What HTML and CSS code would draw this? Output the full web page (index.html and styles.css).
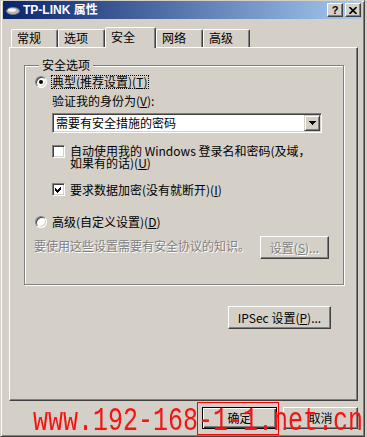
FILE: index.html
```html
<!DOCTYPE html>
<html lang="zh-CN">
<head>
    <meta charset="UTF-8">
    <title>TP-LINK 属性</title>
    <link rel="stylesheet" href="styles.css">
</head>
<body>
    <div class="window">
        <div class="titlebar">
            <svg class="app-icon" width="14" height="9" viewBox="0 0 14 9">
                <ellipse cx="7" cy="5" rx="6.5" ry="3.5" fill="#b8b8b8" stroke="#7a7a7a" stroke-width="1"/>
                <ellipse cx="6" cy="4" rx="4" ry="1.8" fill="#f4f4f4"/>
            </svg>
            <span class="title">TP-LINK 属性</span>
            <div class="title-buttons">
                <span class="tbtn">?</span>
                <span class="tbtn">
                    <svg width="8" height="7" viewBox="0 0 8 7">
                        <path d="M0.5 0 L7.5 7 M7.5 0 L0.5 7" stroke="#000" stroke-width="1.6"/>
                    </svg>
                </span>
            </div>
        </div>

        <div class="tabs">
            <div class="tab">常规</div>
            <div class="tab">选项</div>
            <div class="tab active">安全</div>
            <div class="tab">网络</div>
            <div class="tab">高级</div>
        </div>

        <div class="panel">
            <fieldset class="group">
                <legend>安全选项</legend>

                <div class="option-row typical">
                    <span class="radio checked"></span>
                    <span class="focus">典型(推荐设置)(<u>T</u>)</span>
                </div>

                <div class="field-label">验证我的身份为(<u>V</u>):</div>

                <div class="combo">
                    <span class="combo-text">需要有安全措施的密码</span>
                    <span class="combo-btn">
                        <svg width="7" height="4" viewBox="0 0 7 4" shape-rendering="crispEdges">
                            <polygon points="0,0 7,0 3.5,4" fill="#000"/>
                        </svg>
                    </span>
                </div>

                <div class="check-row auto-login">
                    <span class="checkbox"></span>
                    <span class="check-text">自动使用我的 Windows 登录名和密码(及域，<br>如果有的话)(<u>U</u>)</span>
                </div>

                <div class="check-row encrypt">
                    <span class="checkbox">
                        <svg width="7" height="7" viewBox="0 0 7 7" shape-rendering="crispEdges">
                            <path d="M0 2 L2 4 L6 0 L6 3 L2 7 L0 5 Z" fill="#000"/>
                        </svg>
                    </span>
                    <span class="check-text">要求数据加密(没有就断开)(<u>I</u>)</span>
                </div>

                <div class="option-row advanced">
                    <span class="radio"></span>
                    <span>高级(自定义设置)(<u>D</u>)</span>
                </div>

                <div class="advanced-row">
                    <span class="disabled-text">要使用这些设置需要有安全协议的知识。</span>
                    <button class="btn settings-btn" disabled>设置(<u>S</u>)...</button>
                </div>
            </fieldset>

            <div class="ipsec-row">
                <button class="btn ipsec-btn">IPSec 设置(<u>P</u>)...</button>
            </div>
        </div>

        <div class="footer">
            <button class="btn default">确定</button>
            <button class="btn">取消</button>
        </div>

        <div class="watermark">www.192-168-1-1.net.cn</div>
        <div class="highlight-box"></div>
    </div>
</body>
</html>
```

FILE: styles.css
```css
body {
    margin: 0;
    background: #d4d0c8;
    font-family: "Noto Sans CJK SC", sans-serif;
    font-size: 12px;
    color: #000;
}

.window {
    position: relative;
    box-sizing: border-box;
    width: 365px;
    height: 437px;
    padding: 0 2px;
    background: #d4d0c8;
    border: 1px solid;
    border-color: #d4d0c8 #404040 #404040 #d4d0c8;
    box-shadow: inset 1px 1px #fff, inset -1px -1px #808080;
}

/* title bar */
.titlebar {
    display: flex;
    align-items: center;
    height: 18px;
    background: linear-gradient(to right, #0a246a, #a6caf0);
    color: #fff;
}
.app-icon {
    margin-left: 3px;
    flex: none;
}
.title {
    margin-left: 3px;
    font-family: "Liberation Sans", "Noto Sans CJK SC", sans-serif;
    font-weight: bold;
    font-size: 12px;
    line-height: 18px;
}
.title-buttons {
    display: flex;
    gap: 2px;
    margin-left: auto;
    margin-right: 1px;
}
.tbtn {
    display: flex;
    align-items: center;
    justify-content: center;
    box-sizing: border-box;
    width: 16px;
    height: 14px;
    background: #d4d0c8;
    border: 1px solid;
    border-color: #fff #404040 #404040 #fff;
    box-shadow: inset -1px -1px #808080;
    color: #000;
    font-family: "Liberation Sans", sans-serif;
    font-weight: bold;
    font-size: 11px;
    line-height: 12px;
}

/* tabs */
.tabs {
    position: relative;
    z-index: 1;
    display: flex;
    align-items: flex-end;
    height: 20px;
    margin-top: 8px;
    padding-left: 8px;
}
.tab {
    box-sizing: border-box;
    width: 47px;
    height: 18px;
    padding-left: 5px;
    background: #d4d0c8;
    border: 1px solid;
    border-color: #fff #404040 transparent #fff;
    border-bottom: none;
    border-radius: 2px 2px 0 0;
    box-shadow: inset -1px 0 #808080;
    line-height: 16px;
}
.tab.active {
    width: 51px;
    height: 21px;
    margin-bottom: -1px;
    line-height: 18px;
}

/* page */
.panel {
    box-sizing: border-box;
    width: 349px;
    height: 354px;
    margin-left: 6px;
    border: 1px solid;
    border-color: #fff #404040 #404040 #fff;
    box-shadow: inset -1px -1px #808080;
}

.group {
    box-sizing: border-box;
    width: 320px;
    height: 227px;
    margin: 10px 0 0 14px;
    padding: 0 14px 0 10px;
    min-width: 0;
    border: 1px solid #808080;
    box-shadow: inset 1px 1px #fff, 1px 1px #fff;
}
.group legend {
    margin-left: 4px;
    padding: 0 3px;
    line-height: 14px;
    background: #d4d0c8;
}

.option-row {
    display: flex;
    align-items: center;
    gap: 5px;
    height: 16px;
    line-height: 14px;
}
.option-row.typical {
    margin-top: 2px;
}
.option-row.advanced {
    margin-top: 18px;
}
.focus {
    line-height: 12px;
    padding-right: 1px;
    outline: 1px dotted #000;
}

.radio {
    display: flex;
    align-items: center;
    justify-content: center;
    flex: none;
    box-sizing: border-box;
    width: 12px;
    height: 12px;
    border-radius: 50%;
    background: #fff;
    border: 1px solid;
    border-color: #808080 #fff #fff #808080;
    box-shadow: inset 1px 1px #404040, inset -1px -1px #d4d0c8;
}
.radio.checked::after {
    content: "";
    width: 4px;
    height: 4px;
    border-radius: 50%;
    background: #000;
}

.field-label {
    margin: 4px 0 0 17px;
    line-height: 14px;
}

.combo {
    display: flex;
    align-items: center;
    box-sizing: border-box;
    width: 270px;
    height: 20px;
    margin: 5px 0 0 17px;
    padding: 1px 1px 1px 3px;
    background: #fff;
    border: 1px solid;
    border-color: #808080 #fff #fff #808080;
    box-shadow: inset 1px 1px #404040, inset -1px -1px #d4d0c8;
}
.combo-text {
    flex: 1;
    line-height: 16px;
}
.combo-btn {
    display: flex;
    align-items: center;
    justify-content: center;
    box-sizing: border-box;
    width: 16px;
    height: 16px;
    background: #d4d0c8;
    border: 1px solid;
    border-color: #d4d0c8 #404040 #404040 #d4d0c8;
    box-shadow: inset 1px 1px #fff, inset -1px -1px #808080;
}

.check-row {
    display: flex;
    gap: 5px;
    margin-left: 17px;
}
.check-row.auto-login {
    align-items: flex-start;
    margin-top: 12px;
    line-height: 12px;
}
.check-row.encrypt {
    align-items: center;
    margin-top: 14px;
    line-height: 13px;
}
.checkbox {
    display: flex;
    align-items: center;
    justify-content: center;
    flex: none;
    box-sizing: border-box;
    width: 13px;
    height: 13px;
    background: #fff;
    border: 1px solid;
    border-color: #808080 #fff #fff #808080;
    box-shadow: inset 1px 1px #404040, inset -1px -1px #d4d0c8;
}

.advanced-row {
    display: flex;
    justify-content: space-between;
    align-items: flex-start;
    margin-top: 6px;
}
.disabled-text {
    margin: 3px 0 0 -1px;
    line-height: 14px;
    color: #808080;
    text-shadow: 1px 1px #fff;
}

/* buttons */
.btn {
    box-sizing: border-box;
    height: 23px;
    padding: 0;
    font: inherit;
    font-size: 12px;
    line-height: 14px;
    color: #000;
    background: #d4d0c8;
    border: 1px solid;
    border-color: #fff #404040 #404040 #fff;
    box-shadow: inset -1px -1px #808080;
}
.btn:disabled {
    color: #808080;
    text-shadow: 1px 1px #fff;
}
.settings-btn {
    width: 69px;
}
.ipsec-row {
    display: flex;
    justify-content: flex-end;
    margin-top: 21px;
    padding-right: 26px;
}
.ipsec-btn {
    width: 103px;
}

.footer {
    display: flex;
    justify-content: flex-end;
    gap: 6px;
    margin-top: 6px;
    padding-right: 4px;
}
.footer .btn {
    width: 75px;
    height: 22px;
}
.btn.default {
    border-color: #000;
    box-shadow: inset 1px 1px #fff, inset -1px -1px #404040, inset -2px -2px #808080;
}

/* overlays on the screenshot */
.watermark {
    position: absolute;
    left: 32px;
    top: 403px;
    font-family: "Liberation Mono", monospace;
    font-size: 34px;
    line-height: 34px;
    color: #f41414;
    white-space: nowrap;
    transform: scaleX(0.735);
    transform-origin: left top;
}
.highlight-box {
    position: absolute;
    left: 196px;
    top: 401px;
    box-sizing: border-box;
    width: 82px;
    height: 33px;
    border: 1px solid #f00;
}
```
